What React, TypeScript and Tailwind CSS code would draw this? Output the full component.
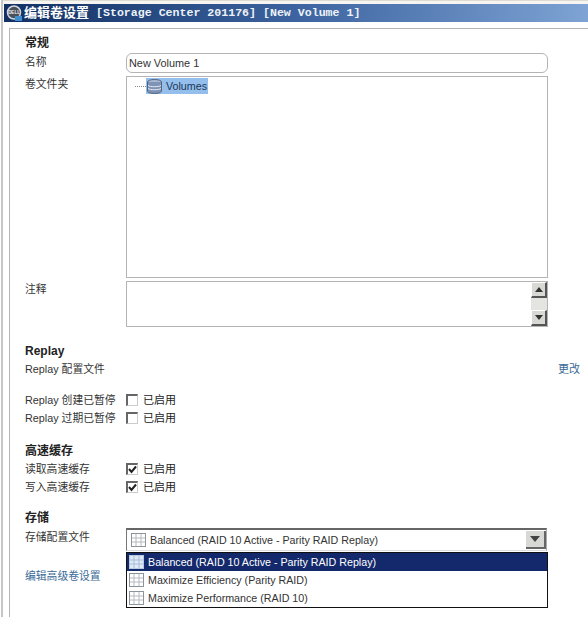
const labelCls = "w-[101px] shrink-0 text-[10.8px] text-[#333]";

const GridIcon = ({ selected = false }: { selected?: boolean }) => (
  <svg width="15" height="14" viewBox="0 0 15 14" className="shrink-0">
    <rect x="0.5" y="0.5" width="14" height="13" fill={selected ? "#dfe8f5" : "#fff"} stroke={selected ? "#b8c8e0" : "#8d949c"} />
    <path d="M5 1v12M10 1v12M1 5h13M1 9h13" stroke={selected ? "#a9bcd8" : "#b5bac0"} fill="none" />
  </svg>
);

const Check = ({ checked = false }: { checked?: boolean }) => (
  <div className="flex items-center gap-[5px]">
    <div className="flex h-[12px] w-[12px] items-center justify-center border-t-2 border-l-2 border-t-[#666] border-l-[#666] border-r border-b border-r-[#ccc] border-b-[#ccc] bg-white">
      {checked && (
        <svg width="9" height="9" viewBox="0 0 9 9">
          <path d="M1 4l2.5 3L8 1.5" stroke="#222" strokeWidth="2" fill="none" />
        </svg>
      )}
    </div>
    <span className="text-[11px] text-[#222]">已启用</span>
  </div>
);

const Heading = ({ children, className = "" }: { children: React.ReactNode; className?: string }) => (
  <div className={`text-[12px] leading-[14px] font-bold text-[#222] ${className}`}>{children}</div>
);

const ScrollBtn = ({ up = false }: { up?: boolean }) => (
  <div className="flex h-[16px] w-[16px] items-center justify-center border-r-2 border-b-2 border-r-[#555] border-b-[#555] border-t border-l border-t-white border-l-white bg-[#d8d8d4]">
    <svg width="8" height="5" viewBox="0 0 8 5">
      <path d={up ? "M0 5L4 0L8 5Z" : "M0 0L8 0L4 5Z"} fill="#333" />
    </svg>
  </div>
);

const menuItems = [
  "Balanced (RAID 10 Active - Parity RAID Replay)",
  "Maximize Efficiency (Parity RAID)",
  "Maximize Performance (RAID 10)",
];

export default function App() {
  return (
    <div className="relative h-[617px] w-[588px] overflow-hidden bg-white pl-[1px] font-['Liberation_Sans','Noto_Sans_CJK_SC',sans-serif]">
      <div className="h-full border-l-2 border-[#c6c6c6]">
        <div className="h-[4px] border-t border-[#dedbd2] bg-[#f6f5f1]" />
        {/* title bar */}
        <div className="ml-[1px] flex h-[18px] items-center bg-gradient-to-r from-[#123063] via-[#3d64a0] to-[#7ea3d4] pl-[2px]">
          <svg width="16" height="16" viewBox="0 0 16 16" className="shrink-0">
            <circle cx="8" cy="7.5" r="6.5" fill="#4a505a" stroke="#d2d6dc" strokeWidth="1.5" />
            <text x="8" y="9" textAnchor="middle" fontSize="4.5" fontWeight="700" fill="#f0f0f0">DELL</text>
            <rect x="9" y="11" width="7" height="5" fill="#3f8fd0" />
          </svg>
          <span className="ml-[2px] text-[13px] font-bold text-white">编辑卷设置</span>
          <span className="ml-[7px] font-['Liberation_Mono',monospace] text-[11.6px] font-bold whitespace-pre text-[#eef2f8]">
            [Storage Center 201176] [New Volume 1]
          </span>
        </div>
        {/* panel */}
        <div className="mt-[6px] ml-[6px] h-[589px] border-t border-l border-[#b5b5b5] pt-[7px] pl-[15px]">
          <Heading className="mb-[3px]">常规</Heading>
          <div className="flex">
            <div className={`${labelCls} pt-[1px]`}>名称</div>
            <div className="flex h-[20px] w-[422px] items-center rounded-[6px] border border-[#b4b4b4] pl-[2px] text-[10.9px] text-[#333]">
              New Volume 1
            </div>
          </div>
          <div className="mt-[3px] flex">
            <div className={labelCls}>卷文件夹</div>
            <div className="h-[202px] w-[422px] border border-[#b4b4b4] pt-[1px] pl-[8px]">
              <div className="flex items-center">
                <div className="w-[11px] border-t border-dotted border-[#888]" />
                <div className="flex h-[16px] items-center bg-[#94bfec]">
                  <svg width="17" height="15" viewBox="0 0 17 15">
                    <ellipse cx="8.5" cy="3" rx="7" ry="2.5" fill="#aab9d2" stroke="#55647e" />
                    <path d="M1.5 3v9c0 1.4 3 2.5 7 2.5s7-1.1 7-2.5V3" fill="#7f93b6" stroke="#55647e" />
                    <path d="M2 6.5c2 1.6 11 1.6 13 0M2 9.5c2 1.6 11 1.6 13 0" stroke="#e8edf5" fill="none" />
                  </svg>
                  <span className="ml-[3px] pr-[1px] text-[10.7px] text-[#1c3557]">Volumes</span>
                </div>
              </div>
            </div>
          </div>
          <div className="mt-[3px] flex">
            <div className={labelCls}>注释</div>
            <div className="flex h-[46px] w-[422px] justify-end border border-[#b4b4b4]">
              <div className="flex w-[16px] flex-col justify-between bg-[#e4e4e0]">
                <ScrollBtn up />
                <ScrollBtn />
              </div>
            </div>
          </div>

          <Heading className="mt-[17px] mb-[4px]">Replay</Heading>
          <div className="flex h-[14px] w-[555px] items-center justify-between text-[10.8px] text-[#333]">
            <span>Replay 配置文件</span>
            <span className="text-[11px] text-[#3a6a96]">更改</span>
          </div>

          <div className="mt-[15px] flex h-[18px] items-center">
            <div className={labelCls}>Replay 创建已暂停</div>
            <Check />
          </div>
          <div className="flex h-[18px] items-center">
            <div className={labelCls}>Replay 过期已暂停</div>
            <Check />
          </div>

          <Heading className="mt-[17px] mb-[2px]">高速缓存</Heading>
          <div className="flex h-[18px] items-center">
            <div className={labelCls}>读取高速缓存</div>
            <Check checked />
          </div>
          <div className="flex h-[18px] items-center">
            <div className={labelCls}>写入高速缓存</div>
            <Check checked />
          </div>

          <Heading className="mt-[15px] mb-[3px]">存储</Heading>
          <div className="flex">
            <div className={`${labelCls} pt-[1px]`}>存储配置文件</div>
            <div className="flex h-[23px] w-[421px] items-center justify-between border-t-2 border-l border-t-[#666] border-l-[#777] border-r border-b border-r-[#aaa] border-b-[#ddd] pl-[4px]">
              <div className="flex items-center gap-[4px]">
                <GridIcon />
                <span className="text-[10.7px] text-[#333]">{menuItems[0]}</span>
              </div>
              <div className="flex h-[18px] w-[20px] items-center justify-center border-r-2 border-b-2 border-r-[#666] border-b-[#666] bg-[#d8d8d4]">
                <svg width="10" height="6" viewBox="0 0 10 6">
                  <path d="M0 0H10L5 6Z" fill="#444" />
                </svg>
              </div>
            </div>
          </div>
          <div className="mt-[17px] text-[10.8px] text-[#3a6a96]">编辑高级卷设置</div>
        </div>
      </div>
      {/* open dropdown */}
      <div className="absolute top-[552px] left-[126px] w-[422px] border border-[#111] bg-white">
        {menuItems.map((item, i) => (
          <div
            key={item}
            className={`flex h-[18px] items-center gap-[4px] pl-[2px] text-[10.7px] ${i === 0 ? "bg-[#14296b] text-white" : "text-[#333]"}`}
          >
            <GridIcon selected={i === 0} />
            <span>{item}</span>
          </div>
        ))}
      </div>
    </div>
  );
}
